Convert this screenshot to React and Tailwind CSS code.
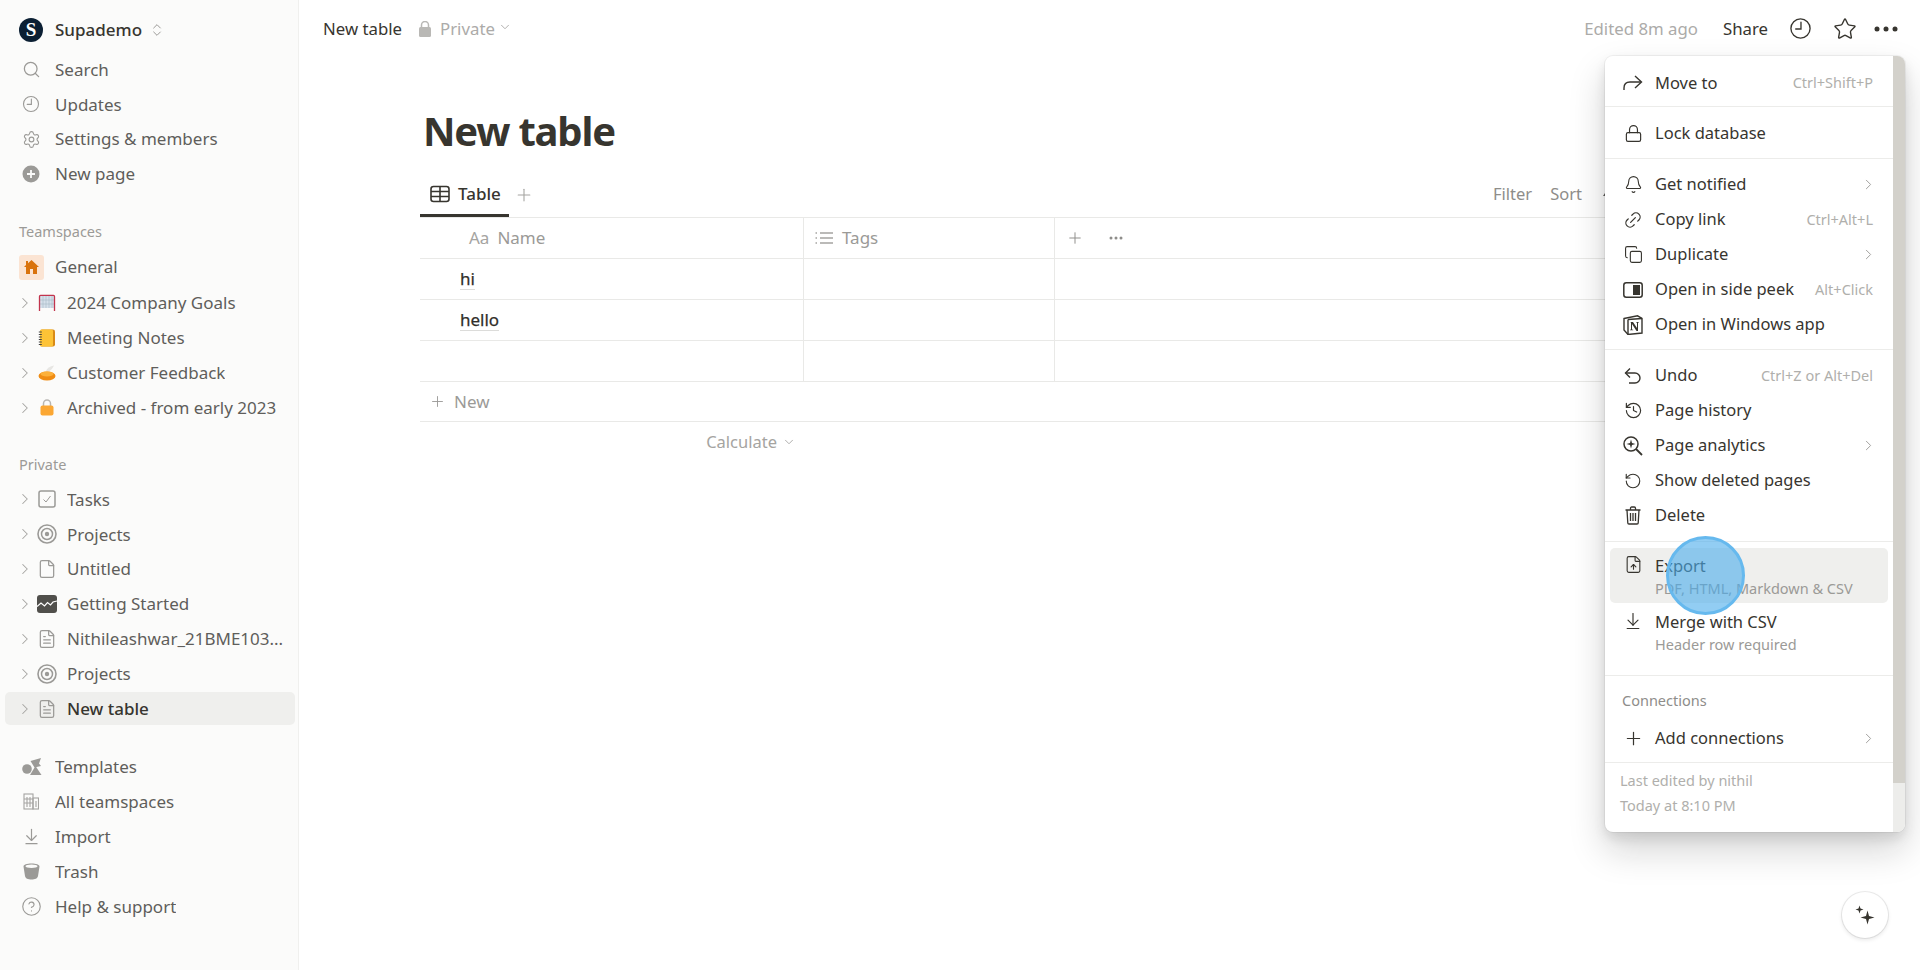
import React from "react";
import { ChevronRight, ChevronDown, ChevronsUpDown, Search, Settings, Plus, Lock, Bell, Copy, History, RotateCcw, FileUp, ArrowDownToLine, CircleHelp, Star, File, FileText, Link2 } from "lucide-react";

const F = { fontFamily: '"Noto Sans", "Liberation Sans", sans-serif' };

function ClockIcon({ size = 20, sw = 1.5, className = "" }) {
  return (
    <svg width={size} height={size} viewBox="0 0 24 24" fill="none" stroke="currentColor" strokeWidth={sw} strokeLinecap="round" className={className}>
      <circle cx="12" cy="12" r="10" />
      <path d="M12.5 5.5v7H7" />
    </svg>
  );
}
function PlusCircle() {
  return (
    <svg width="18" height="18" viewBox="0 0 18 18">
      <circle cx="9" cy="9" r="8.5" fill="#9b9a97" />
      <path d="M9 5v8M5 9h8" stroke="#fbfbfa" strokeWidth="1.8" />
    </svg>
  );
}
function HomeIcon() {
  return (
    <svg width="15" height="14" viewBox="0 0 15 14" fill="#d9730d">
      <path d="M7.5 0 15 7h-2v7H9V9H6v5H2V7H0L2 5.1V1h2v2.3z" />
    </svg>
  );
}
function Goal() {
  return (
    <svg width="18" height="18" viewBox="0 0 18 18">
      <rect x="2" y="2" width="14" height="12" fill="#d5e0ea" />
      <path d="M5 2v12M8 2v12M11 2v12M14 2v12M2 6h14M2 10h14" stroke="#a9b8c6" strokeWidth=".6" />
      <path d="M1.5 17V2.4c0-.6.4-1 1-1h13c.6 0 1 .4 1 1V17" stroke="#c2344d" strokeWidth="1.3" fill="none" />
    </svg>
  );
}
function Notebook() {
  return (
    <svg width="18" height="18" viewBox="0 0 18 18">
      <rect x="2" y="0.5" width="15" height="17" rx="2" fill="#d88a17" />
      <rect x="2" y="0.5" width="13" height="17" rx="1.5" fill="#fdc336" />
      <path d="M.8 3h3M.8 5.5h3M.8 8h3M.8 10.5h3M.8 13h3M.8 15.5h3" stroke="#444" strokeWidth="1" />
    </svg>
  );
}
function Food() {
  return (
    <svg width="18" height="18" viewBox="0 0 18 18">
      <path d="M8 7C9 4 12 2.500 16 1.500 15 4 13 6 11 7.500z" fill="#e7e6e3" />
      <ellipse cx="9" cy="12" rx="8.500" ry="4.500" fill="#f08c13" />
      <ellipse cx="9" cy="10" rx="6.500" ry="2.600" fill="#fcb03a" />
    </svg>
  );
}
function OrangeLock() {
  return (
    <svg width="14" height="17" viewBox="0 0 14 17">
      <path d="M3.500 8V4.500a3.500 3.500 0 0 1 7 0V8" fill="none" stroke="#b8b6b2" strokeWidth="1.500" />
      <rect x="0.500" y="6.500" width="13" height="10" rx="2" fill="#fba733" />
    </svg>
  );
}
function CheckBoxIcon() {
  return (
    <svg width="18" height="18" viewBox="0 0 18 18" fill="none">
      <rect x="1" y="1" width="16" height="16" rx="2" stroke="#9b9a97" strokeWidth="1.500" />
      <path d="M5.500 9.500 8 12l4.500-6" stroke="#9b9a97" strokeWidth="1" />
    </svg>
  );
}
function Target() {
  return (
    <svg width="20" height="20" viewBox="0 0 20 20" fill="none" stroke="#9b9a97">
      <circle cx="10" cy="10" r="9" strokeWidth="1.600" />
      <circle cx="10" cy="10" r="5.500" strokeWidth="1.500" />
      <circle cx="10" cy="10" r="2.200" fill="#9b9a97" strokeWidth="0" />
    </svg>
  );
}
function Chart() {
  return (
    <svg width="20" height="18" viewBox="0 0 20 18">
      <rect width="20" height="18" rx="3" fill="#504f4b" />
      <path d="M0 11.500 4 8l3.500 3 3-3.500 3 2.500L16 7l4-1" stroke="#fff" strokeWidth="1.200" fill="none" />
    </svg>
  );
}
function Templates() {
  return (
    <svg width="20" height="18" viewBox="0 0 20 18" fill="#9b9a97" className="translate-x-[1px]">
      <circle cx="5" cy="11" r="4.800" />
      <path d="M8.500 3 19 0l-2 5.500 2 2.500-6.500 1.500z" />
      <path d="M13.500 8 19.500 17H8z" />
    </svg>
  );
}
function Building() {
  return (
    <svg width="16" height="17" viewBox="0 0 16 17" fill="none" stroke="#a5a4a1" strokeWidth="1.100">
      <rect x="1" y="1" width="9" height="15" />
      <rect x="10" y="5" width="5.500" height="11" />
      <path d="M4 4v10M7 4v10M1 6h9M1 10h9M13 8v6" />
    </svg>
  );
}
function Bin() {
  return (
    <svg width="17" height="17" viewBox="0 0 17 17" fill="#9b9a97">
      <path d="M0.500 3.500C0.500 1.500 4 .5 8.500.5s8 1 8 3L15 13c-.3 2.500-3 3.500-6.500 3.500S2.300 15.500 2 13z" />
      <ellipse cx="8.500" cy="3.300" rx="6" ry="1.700" fill="#fbfbfa" />
    </svg>
  );
}
function TableIcon() {
  return (
    <svg width="20" height="18" viewBox="0 0 20 18" fill="none" stroke="#37352f" strokeWidth="1.600">
      <rect x="1" y="1.500" width="18" height="15" rx="2.500" />
      <path d="M1 6.500h18M1 11.500h18M10 1.500v15" />
    </svg>
  );
}
function ListIcon() {
  return (
    <svg width="18" height="14" viewBox="0 0 18 14" fill="none" stroke="#a5a4a1" strokeWidth="1.300">
      <path d="M5 2h13M5 7h13M5 12h13M.5 2h1.500M.5 7h1.500M.5 12h1.500" />
    </svg>
  );
}
function MoveTo() {
  return (
    <svg width="20" height="16" viewBox="0 0 20 16" fill="none" stroke="#37352f" strokeWidth="1.400">
      <path d="M1 15v-2c0-4 2-6 6-6h11" />
      <path d="M12 1l6.500 6-6.500 6" />
    </svg>
  );
}
function Peek() {
  return (
    <svg width="20" height="16" viewBox="0 0 20 16">
      <rect x=".8" y=".8" width="18.400" height="14.400" rx="2.500" fill="none" stroke="#37352f" strokeWidth="1.500" />
      <rect x="10" y="3" width="7" height="10" fill="#37352f" />
    </svg>
  );
}
function NotionLogo() {
  return (
    <svg width="20" height="20" viewBox="0 0 20 20">
      <path d="M1 3.500 14.500.8 19 3.500V18l-14 1.500L1 15z" fill="none" stroke="#37352f" strokeWidth="1.400" />
      <path d="M5 4.500 19 3.500M5 4.500v15" stroke="#37352f" strokeWidth="1.400" fill="none" />
      <path d="M7.500 7h2.500l4 6V7.500h-1V7h3v.5h-1V16h-1.500L9 9v5.500l1.200.3v.5H7v-.5l1-.3V7.500l-.5-.1z" fill="#37352f" />
    </svg>
  );
}
function Undo() {
  return (
    <svg width="18" height="18" viewBox="0 0 18 18" fill="none" stroke="#37352f" strokeWidth="1.400">
      <path d="M6 1.500 1.500 6 6 10.500" />
      <path d="M1.500 6H11a5 5 0 0 1 0 10H5" />
    </svg>
  );
}
function Analytics() {
  return (
    <svg width="20" height="20" viewBox="0 0 20 20" fill="none" stroke="#37352f">
      <circle cx="8" cy="8" r="7" strokeWidth="1.500" />
      <path d="m13 13 6 6" strokeWidth="1.800" />
      <path d="M8 3.500 9 7l3.500 1L9 9l-1 3.500L7 9 3.500 8 7 7z" fill="#37352f" strokeWidth="0" />
    </svg>
  );
}
function TrashIcon() {
  return (
    <svg width="16" height="19" viewBox="0 0 16 19" fill="none" stroke="#37352f" strokeWidth="1.300">
      <path d="M.5 4h15M5.500 4V2.200c0-.7.5-1.200 1.200-1.200h2.600c.7 0 1.200.5 1.200 1.200V4M2 4l.8 13c0 .7.5 1 1.200 1h8c.7 0 1.200-.3 1.200-1L14 4M5.500 7v8M8 7v8M10.500 7v8" />
    </svg>
  );
}
function Sparkle() {
  return (
    <svg width="20" height="20" viewBox="0 0 20 20" fill="#37352f">
      <path d="M12.500 5.500 14 11l5.500 1.500L14 14l-1.500 5.500L11 14l-5.500-1.500L11 11z" />
      <path d="M4.500 0.500 5.500 3.500l3 1-3 1-1 3-1-3-3-1 3-1z" />
    </svg>
  );
}

function NavRow({ icon, label }) {
  return (
    <div className="flex h-[34.9px] items-center text-[17px] text-[#5f5e5b]">
      <span className="flex w-[50px] shrink-0 items-center justify-center pl-[2px]">{icon}</span>
      <span className="truncate">{label}</span>
    </div>
  );
}
function PageRow({ icon, label, active = false }) {
  return (
    <div className={`flex items-center rounded-[5px] text-[17px] ${active ? "my-[1px] h-[32.9px] bg-[#efefed] font-medium text-[#37352f]" : "h-[34.9px] text-[#5f5e5b]"}`}>
      <ChevronRight size={18} strokeWidth={1.4} className="ml-[11px] shrink-0 text-[#a5a4a1]" />
      <span className="ml-[1px] flex w-[24px] shrink-0 items-center justify-center">{icon}</span>
      <span className="ml-[8px] truncate">{label}</span>
    </div>
  );
}
function Sidebar() {
  return (
    <aside className="flex w-[299px] shrink-0 flex-col border-r border-[#f0f0ee] bg-[#fbfbfa] pt-[12px]">
      <div className="flex h-[35px] items-center pl-[19px] text-[17px] font-medium text-[#37352f]">
        <span className="flex h-[24px] w-[24px] items-center justify-center rounded-full bg-[#0b1f33] text-[19px] font-bold leading-none text-white" style={{ fontFamily: '"Liberation Serif", serif' }}>S</span>
        <span className="ml-[12px]">Supademo</span>
        <ChevronsUpDown size={16} strokeWidth={1.5} className="ml-[7px] text-[#9b9a97]" />
      </div>
      <div className="mt-[5px] flex flex-col pl-[5px] pr-[3px]">
        <NavRow icon={<Search size={19} strokeWidth={1.6} className="text-[#9b9a97]" />} label="Search" />
        <NavRow icon={<ClockIcon size={18} className="text-[#9b9a97]" />} label="Updates" />
        <NavRow icon={<Settings size={19} strokeWidth={1.4} className="text-[#9b9a97]" />} label="Settings & members" />
        <NavRow icon={<PlusCircle />} label="New page" />
      </div>
      <div className="mt-[25px] flex h-[30px] items-center pl-[19px] text-[14.500px] text-[#9b9a97]">Teamspaces</div>
      <div className="mt-[3px] flex flex-col pl-[5px] pr-[3px]">
        <NavRow icon={<span className="flex h-[25px] w-[25px] items-center justify-center rounded-[3px] bg-[#fbe4d3]"><HomeIcon /></span>} label="General" />
        <div className="h-[1px]" />
        <PageRow icon={<Goal />} label="2024 Company Goals" />
        <PageRow icon={<Notebook />} label="Meeting Notes" />
        <PageRow icon={<Food />} label="Customer Feedback" />
        <PageRow icon={<OrangeLock />} label="Archived - from early 2023" />
      </div>
      <div className="mt-[25px] flex h-[30px] items-center pl-[19px] text-[14.500px] text-[#9b9a97]">Private</div>
      <div className="mt-[2px] flex flex-col pl-[5px] pr-[3px]">
        <PageRow icon={<CheckBoxIcon />} label="Tasks" />
        <PageRow icon={<Target />} label="Projects" />
        <PageRow icon={<File size={20} strokeWidth={1.5} className="text-[#9b9a97]" />} label="Untitled" />
        <PageRow icon={<Chart />} label="Getting Started" />
        <PageRow icon={<FileText size={20} strokeWidth={1.5} className="text-[#9b9a97]" />} label="Nithileashwar_21BME103..." />
        <PageRow icon={<Target />} label="Projects" />
        <PageRow icon={<FileText size={20} strokeWidth={1.5} className="text-[#9b9a97]" />} label="New table" active />
      </div>
      <div className="mt-[23px] flex flex-col pl-[5px] pr-[3px]">
        <NavRow icon={<Templates />} label="Templates" />
        <NavRow icon={<Building />} label="All teamspaces" />
        <NavRow icon={<ArrowDownToLine size={19} strokeWidth={1.5} className="text-[#9b9a97]" />} label="Import" />
        <NavRow icon={<Bin />} label="Trash" />
        <NavRow icon={<CircleHelp size={21} strokeWidth={1.3} className="text-[#9b9a97]" />} label="Help & support" />
      </div>
    </aside>
  );
}

function TopBar() {
  return (
    <header className="flex h-[57px] items-center pl-[24px] pr-[22px] text-[16.800px] text-[#37352f]">
      <span>New table</span>
      <svg width="12" height="16" viewBox="0 0 12 16" className="ml-[17px]" fill="#b9b8b5">
        <path d="M2.500 7V4a3.500 3.500 0 0 1 7 0v3" fill="none" stroke="#b9b8b5" strokeWidth="1.500" />
        <rect y="6" width="12" height="10" rx="1.500" />
      </svg>
      <span className="ml-[9px] text-[#acaba9]">Private</span>
      <ChevronDown size={14} strokeWidth={1.6} className="ml-[3px] -translate-y-[2px] text-[#acaba9]" />
      <span className="ml-auto text-[#acaba9]">Edited 8m ago</span>
      <span className="ml-[25px]">Share</span>
      <ClockIcon size={23} sw={1.4} className="ml-[21px] text-[#37352f]" />
      <Star size={24} strokeWidth={1.4} className="ml-[21px] text-[#37352f]" />
      <svg width="24" height="6" viewBox="0 0 24 6" className="ml-[17px]" fill="#37352f">
        <circle cx="3" cy="3" r="2.500" />
        <circle cx="12" cy="3" r="2.500" />
        <circle cx="21" cy="3" r="2.500" />
      </svg>
    </header>
  );
}

function Cell({ w, children }) {
  return <div className={`flex h-full shrink-0 items-center border-r border-[#e9e9e7] ${w}`}>{children}</div>;
}
function DataRow({ name }) {
  return (
    <div className="flex h-[41px] border-b border-[#e9e9e7] text-[17px] text-[#2f2d28]">
      <Cell w="w-[384px]">
        {name && <span className="ml-[40px] border-b border-[#dcdcda] leading-[20px] [-webkit-text-stroke:0.25px_#37352f]">{name}</span>}
      </Cell>
      <Cell w="w-[251px]" />
    </div>
  );
}
function Content() {
  return (
    <main className="flex min-w-0 flex-1 flex-col overflow-hidden">
      <TopBar />
      <div className="pl-[121px]">
        <h1 className="mt-[40px] pl-[3px] text-[40px] font-bold leading-[68px] tracking-[-1.200px] text-[#37352f]">New table</h1>
        <div className="mt-[10px] flex h-[43px] w-[1300px] items-center border-b border-[#e9e9e7] pb-[3px] pr-[106px]">
          <div className="-mb-[3px] flex h-[43px] w-[89px] items-center self-end border-b-[3px] border-[#37352f] pl-[10px] text-[17px] font-medium text-[#37352f]">
            <TableIcon />
            <span className="ml-[8px]">Table</span>
          </div>
          <Plus size={20} strokeWidth={1.3} className="ml-[5px] text-[#a5a4a1]" />
          <span className="ml-auto text-[16.500px] text-[#8e8d8a]">Filter</span>
          <span className="ml-[18px] text-[16.500px] text-[#8e8d8a]">Sort</span>
          <svg width="12" height="16" viewBox="0 0 12 16" className="ml-[20px]" fill="#5f5e5b"><path d="M7 0 1 9h4l-1 7 7-10H7z" /></svg>
        </div>
        <div className="flex h-[41px] w-[1300px] border-b border-[#e9e9e7] text-[17px] text-[#9b9a97]">
          <Cell w="w-[384px]">
            <span className="ml-[49px] text-[#a5a4a1]">Aa</span>
            <span className="ml-[8px]">Name</span>
          </Cell>
          <Cell w="w-[251px]">
            <span className="ml-[11px]"><ListIcon /></span>
            <span className="ml-[9px]">Tags</span>
          </Cell>
          <Plus size={18} strokeWidth={1.3} className="ml-[11px] self-center text-[#8e8d8a]" />
          <svg width="14" height="4" viewBox="0 0 14 4" className="ml-[25px] self-center" fill="#8e8d8a">
            <circle cx="2" cy="2" r="1.500" />
            <circle cx="7" cy="2" r="1.500" />
            <circle cx="12" cy="2" r="1.500" />
          </svg>
        </div>
        <div className="w-[1300px]">
          <DataRow name="hi" />
          <DataRow name="hello" />
          <DataRow />
          <div className="flex h-[40px] items-center border-b border-[#e9e9e7] pl-[9px] text-[17px] text-[#9b9a97]">
            <Plus size={17} strokeWidth={1.3} />
            <span className="ml-[8px]">New</span>
          </div>
          <div className="flex h-[40px] w-[384px] items-center justify-end pr-[8px] text-[16.500px] text-[#a5a4a1]">
            <span>Calculate</span>
            <ChevronDown size={14} strokeWidth={1.5} className="ml-[5px]" />
          </div>
        </div>
      </div>
    </main>
  );
}

function MenuItem({ icon, label, hint, chevron = false }) {
  return (
    <div className="flex h-[35px] items-center pl-[17px] pr-[20px] text-[16.500px] text-[#37352f]">
      <span className="flex w-[22px] shrink-0 items-center justify-center">{icon}</span>
      <span className="ml-[11px]">{label}</span>
      {hint && <span className="ml-auto text-[14.500px] text-[#b0afac]">{hint}</span>}
      {chevron && <ChevronRight size={17} strokeWidth={1.3} className="ml-auto -mr-[4px] text-[#9b9a97]" />}
    </div>
  );
}
function Rule() {
  return <div className="h-px bg-[#ececea]" />;
}
function TwoLine({ icon, label, sub, active = false, className = "" }) {
  return (
    <div className={`mx-[5px] flex h-[55px] items-start rounded-[5px] pl-[12px] ${active ? "bg-[#efefed]" : ""} ${className}`}>
      <span className="mt-[7px] flex w-[22px] shrink-0 justify-center">{icon}</span>
      <div className="ml-[11px] flex flex-col">
        <span className="mt-[6px] text-[16.500px] leading-[24px] text-[#37352f]">{label}</span>
        <span className="text-[14.500px] leading-[20px] text-[#9b9a97]">{sub}</span>
      </div>
    </div>
  );
}
function Menu() {
  const ic = "#37352f";
  return (
    <div className="absolute left-[1605px] top-[56px] flex h-[776px] w-[300px] overflow-hidden rounded-[8px] bg-white shadow-[0_0_0_1px_rgba(15,15,15,0.05),0_6px_12px_rgba(15,15,15,0.1),0_18px_36px_rgba(15,15,15,0.18)]">
      <div className="flex w-[288px] flex-col">
        <div className="pt-[9.500px] pb-[5.500px]">
          <MenuItem icon={<MoveTo />} label="Move to" hint="Ctrl+Shift+P" />
        </div>
        <Rule />
        <div className="pt-[9px] pb-[7px]">
          <MenuItem icon={<Lock size={19} strokeWidth={1.5} color={ic} />} label="Lock database" />
        </div>
        <Rule />
        <div className="pt-[8px] pb-[7px]">
          <MenuItem icon={<Bell size={19} strokeWidth={1.4} color={ic} />} label="Get notified" chevron />
          <MenuItem icon={<Link2 size={20} strokeWidth={1.5} color={ic} className="-rotate-45" />} label="Copy link" hint="Ctrl+Alt+L" />
          <MenuItem icon={<Copy size={19} strokeWidth={1.4} color={ic} />} label="Duplicate" chevron />
          <MenuItem icon={<Peek />} label="Open in side peek" hint="Alt+Click" />
          <MenuItem icon={<NotionLogo />} label="Open in Windows app" />
        </div>
        <Rule />
        <div className="pt-[8px] pb-[8px]">
          <MenuItem icon={<Undo />} label="Undo" hint="Ctrl+Z or Alt+Del" />
          <MenuItem icon={<History size={19} strokeWidth={1.5} color={ic} />} label="Page history" />
          <MenuItem icon={<Analytics />} label="Page analytics" chevron />
          <MenuItem icon={<RotateCcw size={18} strokeWidth={1.5} color={ic} />} label="Show deleted pages" />
          <MenuItem icon={<TrashIcon />} label="Delete" />
        </div>
        <Rule />
        <div className="pt-[6px] pb-[16px]">
          <TwoLine active icon={<FileUp size={19} strokeWidth={1.4} color={ic} />} label="Export" sub="PDF, HTML, Markdown & CSV" />
          <TwoLine className="mt-[1px]" icon={<ArrowDownToLine size={20} strokeWidth={1.4} color={ic} />} label="Merge with CSV" sub="Header row required" />
        </div>
        <Rule />
        <div className="flex h-[36px] items-end pl-[17px] text-[14.500px] text-[#8e8d8a]">Connections</div>
        <div className="pb-[6px] pt-[9px]">
          <MenuItem icon={<Plus size={21} strokeWidth={1.4} color={ic} />} label="Add connections" chevron />
        </div>
        <Rule />
        <div className="flex flex-col pl-[15px] pt-[5px] text-[14.500px] leading-[25px] text-[#b0afac]">
          <span>Last edited by nithil</span>
          <span>Today at 8:10 PM</span>
        </div>
      </div>
      <div className="w-[12px] bg-[#ededeb]">
        <div className="h-[727px] bg-[#d3d1cb]" />
      </div>
    </div>
  );
}

export default function App() {
  return (
    <div className="relative flex h-[970px] w-[1920px] overflow-hidden bg-white" style={F}>
      <Sidebar />
      <Content />
      <Menu />
      <div className="absolute left-[1666px] top-[536px] h-[79px] w-[79px] rounded-full border-[3px] border-[#66b9ee] bg-[#4aaceb]/60" />
      <div className="absolute left-[1842px] top-[892px] flex h-[46px] w-[46px] items-center justify-center rounded-full bg-white shadow-[0_0_0_1px_rgba(15,15,15,0.08),0_2px_4px_rgba(15,15,15,0.1)]">
        <Sparkle />
      </div>
    </div>
  );
}
